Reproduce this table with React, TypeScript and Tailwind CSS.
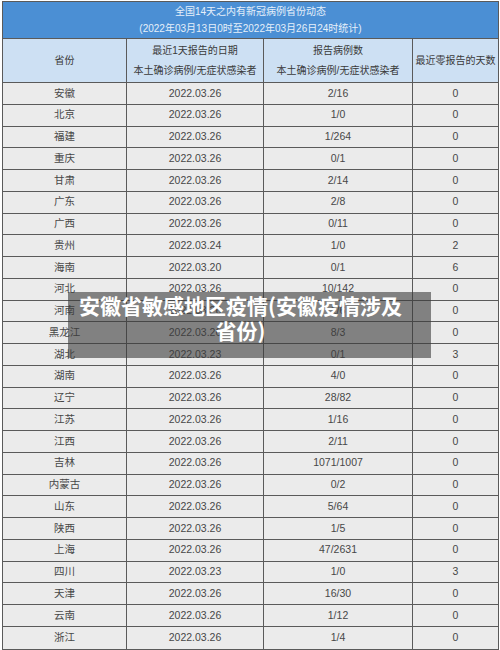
import React from "react";

const rows: [string, string, string, string][] = [
  ["安徽", "2022.03.26", "2/16", "0"],
  ["北京", "2022.03.26", "1/0", "0"],
  ["福建", "2022.03.26", "1/264", "0"],
  ["重庆", "2022.03.26", "0/1", "0"],
  ["甘肃", "2022.03.26", "2/14", "0"],
  ["广东", "2022.03.26", "2/8", "0"],
  ["广西", "2022.03.26", "0/11", "0"],
  ["贵州", "2022.03.24", "1/0", "2"],
  ["海南", "2022.03.20", "0/1", "6"],
  ["河北", "2022.03.26", "10/142", "0"],
  ["河南", "2022.03.26", "1/6", "0"],
  ["黑龙江", "2022.03.26", "8/3", "0"],
  ["湖北", "2022.03.23", "0/1", "3"],
  ["湖南", "2022.03.26", "4/0", "0"],
  ["辽宁", "2022.03.26", "28/82", "0"],
  ["江苏", "2022.03.26", "1/16", "0"],
  ["江西", "2022.03.26", "2/11", "0"],
  ["吉林", "2022.03.26", "1071/1007", "0"],
  ["内蒙古", "2022.03.26", "0/2", "0"],
  ["山东", "2022.03.26", "5/64", "0"],
  ["陕西", "2022.03.26", "1/5", "0"],
  ["上海", "2022.03.26", "47/2631", "0"],
  ["四川", "2022.03.23", "1/0", "3"],
  ["天津", "2022.03.26", "16/30", "0"],
  ["云南", "2022.03.26", "1/12", "0"],
  ["浙江", "2022.03.26", "1/4", "0"],
];

const cols = "grid grid-cols-[124px_137px_149px_85px]";

export default function App() {
  return (
    <div className="relative w-[500px] h-[650px] bg-white overflow-hidden font-['Liberation_Sans','Noto_Sans_CJK_SC',sans-serif]">
      <div className="ml-[2px] mt-[1px] w-[497px] border border-[#5a5a5a]">
        {/* title band */}
        <div className="h-[37px] bg-[#4b8fd4] flex flex-col items-center justify-center text-[10px] leading-[17px] text-[#e6effa] border-b border-[#5a5a5a]">
          <div>全国14天之内有新冠病例省份动态</div>
          <div>(2022年03月13日0时至2022年03月26日24时统计)</div>
        </div>

        {/* header row */}
        <div className={`${cols} h-[44px] bg-[#cde0f3] text-[10px] text-[#3a3a3a] border-b border-[#5a5a5a]`}>
          <div className="flex items-center justify-center border-r border-[#5a5a5a]">省份</div>
          <div className="flex flex-col items-center justify-center leading-[20px] border-r border-[#5a5a5a]">
            <div>最近1天报告的日期</div>
            <div>本土确诊病例/无症状感染者</div>
          </div>
          <div className="flex flex-col items-center justify-center leading-[20px] border-r border-[#5a5a5a]">
            <div>报告病例数</div>
            <div>本土确诊病例/无症状感染者</div>
          </div>
          <div className="flex items-center justify-center whitespace-nowrap">最近零报告的天数</div>
        </div>

        {/* data rows */}
        {rows.map((r, i) => (
          <div
            key={r[0]}
            className={`${cols} h-[21.76px] bg-[#ebebeb] text-[10.5px] text-[#474747] ${i < rows.length - 1 ? "border-b border-[#5a5a5a]" : ""}`}
          >
            <div className="flex items-center justify-center border-r border-[#5a5a5a]">{r[0]}</div>
            <div className="flex items-center justify-center border-r border-[#5a5a5a]">{r[1]}</div>
            <div className="flex items-center justify-center border-r border-[#5a5a5a]">{r[2]}</div>
            <div className="flex items-center justify-center">{r[3]}</div>
          </div>
        ))}
      </div>

      {/* caption overlay */}
      <div className="absolute left-[68px] top-[292px] w-[363px] h-[66px] bg-[#3a3a3a]/60 pt-[1px] pr-[18px] text-center text-white font-bold text-[21px] leading-[25px] whitespace-nowrap font-['Noto_Sans_CJK_SC',sans-serif]">
        安徽省敏感地区疫情(安徽疫情涉及
        <br />
        省份)
      </div>
    </div>
  );
}
